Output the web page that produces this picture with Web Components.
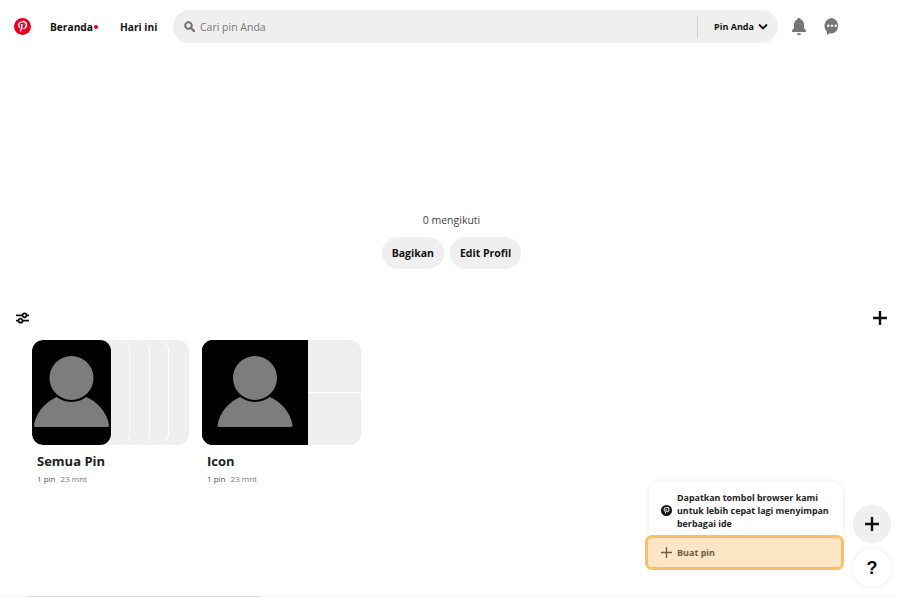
<!DOCTYPE html>
<html>
<head>
<meta charset="utf-8">
<title>Pin Anda</title>
<style>
    html,body{
        margin: 0;
        height: 100%;
        overflow: hidden;
        background: #fff;
        color: #111;
        font-family: "Open Sans", "Noto Sans", sans-serif;
    }
</style>
</head>
<body>
<app-page>
    <top-bar></top-bar>
    <profile-head></profile-head>
    <board-tools></board-tools>
    <board-list>
        <board-card name="Semua Pin" meta="23 mnt" kind="stack"></board-card>
        <board-card name="Icon" meta="23 mnt" kind="grid"></board-card>
    </board-list>
    <float-help></float-help>
</app-page>

<script>
const PERSON=/*html*/`
    <svg viewBox="0 0 79 105" width="100%" height="100%">
        <rect x="-20" width="119" height="105" fill="#000"/>
        <path d="M2 85C4 72 14 61 27 56H52C65 61 75 72 77 85C77 86.500 76 87 75 87H4C3 87 2 86.500 2 85Z" fill="#7d7d7d"/>
        <circle cx="39.500" cy="38" r="24" fill="#000"/>
        <circle cx="39.500" cy="38" r="22" fill="#7d7d7d"/>
    </svg>`;

class AppPage extends HTMLElement{
    constructor() {
        super();
        this.attachShadow({ mode: "open" }).innerHTML=/*html*/`
            <style>
                :host{
                    display: flex;
                    flex-direction: column;
                    position: relative;
                    height: 597px;
                    overflow: hidden;
                }
                .scroll{
                    position: absolute;
                    left: 0;
                    right: 0;
                    bottom: 0;
                    height: 1px;
                    background: #f4f4f4;
                }
                .scroll i{
                    display: block;
                    margin-left: 27px;
                    width: 233px;
                    height: 1px;
                    background: #d9d9d9;
                }
            </style>
            <slot></slot>
            <div class="scroll"><i></i></div>
        `;
    }
}

class TopBar extends HTMLElement{
    constructor() {
        super();
        this.attachShadow({ mode: "open" }).innerHTML=/*html*/`
            <style>
                :host{
                    display: flex;
                    align-items: center;
                    height: 53px;
                    padding-left: 14px;
                    font-size: 10.200px;
                    font-weight: 700;
                    color: #111;
                }
                .logo{
                    width: 17px;
                    height: 17px;
                    margin-right: 19px;
                }
                a{
                    display: flex;
                    align-items: center;
                }
                .home{
                    width: 70px;
                }
                .home i{
                    width: 4px;
                    height: 4px;
                    margin-left: 1px;
                    border-radius: 50%;
                    background: #e60023;
                }
                .today{
                    width: 53px;
                }
                .search{
                    display: flex;
                    align-items: center;
                    width: 605px;
                    height: 33px;
                    box-sizing: border-box;
                    padding: 0 10px 0 11px;
                    border-radius: 17px;
                    background: #efefef;
                    font-size: 10.500px;
                    font-weight: 400;
                    color: #767676;
                }
                .search svg.glass{
                    width: 11px;
                    height: 11px;
                    margin-right: 5px;
                }
                .search span{
                    flex: 1;
                }
                .scope{
                    display: flex;
                    align-items: center;
                    height: 22px;
                    padding-left: 16px;
                    border-left: 1px solid #d0d0d0;
                    font-size: 9px;
                    font-weight: 700;
                    color: #111;
                }
                .scope svg{
                    width: 10px;
                    height: 7px;
                    margin-left: 4px;
                }
                .bell{
                    width: 14px;
                    height: 18px;
                    margin-left: 14px;
                }
                .chat{
                    width: 16px;
                    height: 17px;
                    margin-left: 18px;
                }
            </style>
            <svg class="logo" viewBox="0 0 24 24">
                <circle cx="12" cy="12" r="12" fill="#e60023"/>
                <path fill="#fff" d="M12.300 4.500C8 4.500 5.700 7.300 5.700 10.400c0 1.500.8 3.300 2 3.900.4.200.5.100.6-.3l.3-1.100c0-.2 0-.3-.1-.5-.5-.6-.8-1.400-.8-2.200 0-2.200 1.700-4.200 4.400-4.200 2.400 0 4.100 1.600 4.100 3.900 0 2.600-1.300 4.400-3 4.400-.9 0-1.600-.8-1.400-1.700.3-1.100.8-2.300.8-3.100 0-.7-.4-1.300-1.200-1.300-.9 0-1.700 1-1.700 2.300 0 .8.300 1.400.3 1.400l-1.100 4.600c-.3 1.200 0 3.200.1 3.400 0 .1.200.1.200 0 .1-.2 1.200-1.700 1.600-3.100l.6-2.300c.3.600 1.200 1.100 2.200 1.100 2.900 0 5-2.700 5-6 0-3.200-2.600-5.600-5.700-5.600z"/>
            </svg>
            <a class="home">Beranda<i></i></a>
            <a class="today">Hari ini</a>
            <div class="search">
                <svg class="glass" viewBox="0 0 11 11" fill="none" stroke="#707070">
                    <circle cx="4.500" cy="4.500" r="3.300" stroke-width="2"/>
                    <path d="M7 7 10 10" stroke-width="2.400" stroke-linecap="round"/>
                </svg>
                <span>Cari pin Anda</span>
                <div class="scope">Pin Anda
                    <svg viewBox="0 0 10 7"><path d="M1 1.500 5 5.500 9 1.500" fill="none" stroke="#111" stroke-width="1.800"/></svg>
                </div>
            </div>
            <svg class="bell" viewBox="0 0 14 18">
                <path fill="#767676" d="M7 0C8 0 8.700.7 8.800 1.600 10.900 2.300 12 4.300 12 6.500V10l2 2.500V14H0v-1.500L2 10V6.500C2 4.300 3.100 2.300 5.200 1.600 5.300.7 6 0 7 0zM5 15.200h4a2 2 0 0 1-4 0z"/>
            </svg>
            <svg class="chat" viewBox="0 0 16 17">
                <path fill="#767676" d="M8 0a8 8 0 0 1 0 15.500c-.7 0-1.500-.1-2.200-.3L3 17v-3.200A8 8 0 0 1 8 0z"/>
                <circle cx="4.300" cy="7.800" r="1.200" fill="#fff"/>
                <circle cx="8" cy="7.800" r="1.200" fill="#fff"/>
                <circle cx="11.700" cy="7.800" r="1.200" fill="#fff"/>
            </svg>
        `;
    }
}

class ProfileHead extends HTMLElement{
    constructor() {
        super();
        this.attachShadow({ mode: "open" }).innerHTML=/*html*/`
            <style>
                :host{
                    display: flex;
                    flex-direction: column;
                    align-items: center;
                    padding: 159px 0 0 3px;
                }
                p{
                    margin: 0 0 9px;
                    font-size: 10.500px;
                    line-height: 16px;
                    color: #444;
                }
                div{
                    display: flex;
                    gap: 6px;
                }
                button{
                    height: 32px;
                    padding: 0 10px;
                    border: 0;
                    border-radius: 16px;
                    background: #efefef;
                    color: #111;
                    font: 700 10.500px "Open Sans", sans-serif;
                }
            </style>
            <p>0 mengikuti</p>
            <div>
                <button>Bagikan</button>
                <button>Edit Profil</button>
            </div>
        `;
    }
}

class BoardTools extends HTMLElement{
    constructor() {
        super();
        this.attachShadow({ mode: "open" }).innerHTML=/*html*/`
            <style>
                :host{
                    display: flex;
                    justify-content: space-between;
                    align-items: center;
                    height: 17px;
                    margin-top: 40px;
                    padding: 0 13px 0 16px;
                }
                .filter{
                    width: 13px;
                    height: 14px;
                }
                .add{
                    width: 14px;
                    height: 14px;
                }
            </style>
            <svg class="filter" viewBox="0 0 13 14" fill="none" stroke="#111" stroke-width="1.800">
                <path d="M0 4.300H13M0 9.700H13"/>
                <circle cx="8.500" cy="4.300" r="2" fill="#fff"/>
                <circle cx="4.500" cy="9.700" r="2" fill="#fff"/>
            </svg>
            <svg class="add" viewBox="0 0 14 14"><path d="M7 0V14M0 7H14" stroke="#111" stroke-width="2.400"/></svg>
        `;
    }
}

class BoardList extends HTMLElement{
    constructor() {
        super();
        this.attachShadow({ mode: "open" }).innerHTML=/*html*/`
            <style>
                :host{
                    display: flex;
                    gap: 13px;
                    margin-top: 14px;
                    padding-left: 32px;
                }
            </style>
            <slot></slot>
        `;
    }
}

class BoardCard extends HTMLElement{
    connectedCallback() {
        if (this.shadowRoot) return;
        const kind=this.getAttribute("kind");
        const cover=kind == "stack" ? /*html*/`
            <div class="stack">
                <i class="s4"></i><i class="s3"></i><i class="s2"></i><i class="s1"></i>
                <div class="top">${PERSON}</div>
            </div>` : /*html*/`
            <div class="grid">
                <div class="big">${PERSON}</div>
                <div class="side"><i></i><i></i></div>
            </div>`;
        this.attachShadow({ mode: "open" }).innerHTML=/*html*/`
            <style>
                :host{
                    display: block;
                    width: 157px;
                }
                .stack,.grid{
                    height: 105px;
                    width: 157px;
                    border-radius: 11px;
                    overflow: hidden;
                }
                .stack{
                    position: relative;
                }
                .stack i{
                    position: absolute;
                    top: 0;
                    left: 0;
                    height: 105px;
                    background: #efefef;
                    border-radius: 11px;
                    border-right: 1px solid #fff;
                    box-sizing: border-box;
                }
                .s1{ width: 98px; }
                .s2{ width: 118px; }
                .s3{ width: 137px; }
                .s4{ width: 157px; border-right: 0 !important; }
                .top{
                    position: absolute;
                    top: 0;
                    left: 0;
                    width: 79px;
                    height: 105px;
                    border-radius: 11px;
                    overflow: hidden;
                }
                .grid{
                    display: flex;
                    width: 159px;
                }
                .big{
                    width: 106px;
                    height: 105px;
                    background: #000;
                    overflow: hidden;
                }
                .side{
                    display: flex;
                    flex-direction: column;
                    gap: 1px;
                    flex: 1;
                }
                .side i{
                    flex: 1;
                    background: #efefef;
                }
                svg{
                    display: block;
                }
                h3{
                    margin: 7px 0 0 5px;
                    font-size: 13px;
                    line-height: 18px;
                    font-weight: 700;
                    color: #222;
                    white-space: nowrap;
                }
                p{
                    margin: 3px 0 0 5px;
                    font-size: 8px;
                    line-height: 12px;
                    color: #555;
                }
                p span{
                    margin-left: 3px;
                    color: #767676;
                }
            </style>
            ${cover}
            <h3>${this.getAttribute("name")}</h3>
            <p>1 pin <span>${this.getAttribute("meta")}</span></p>
        `;
    }
}

class FloatHelp extends HTMLElement{
    constructor() {
        super();
        this.attachShadow({ mode: "open" }).innerHTML=/*html*/`
            <style>
                :host{
                    display: block;
                    position: absolute;
                    right: 9px;
                    bottom: 9px;
                    width: 246px;
                    height: 106px;
                    font-size: 9px;
                    font-weight: 700;
                }
                .menu{
                    position: absolute;
                    left: 0;
                    top: 0;
                    width: 199px;
                }
                .tip{
                    display: flex;
                    align-items: center;
                    gap: 5px;
                    height: 54px;
                    box-sizing: border-box;
                    margin: 0 1px 0 4px;
                    padding: 2px 8px 0 12px;
                    border-radius: 11px 11px 0 0;
                    background: #fff;
                    box-shadow: 0 0 5px rgba(0,0,0,.1);
                    line-height: 13px;
                    color: #222;
                }
                .tip svg{
                    flex: none;
                    width: 11px;
                    height: 11px;
                }
                .tip span{
                    font-size: 8.900px;
                }
                .make{
                    display: flex;
                    align-items: center;
                    gap: 5px;
                    position: relative;
                    height: 35px;
                    margin-top: -1px;
                    box-sizing: border-box;
                    padding-left: 13px;
                    border: 3px solid #f8c06a;
                    border-radius: 7px;
                    background: #fde6c6;
                    color: #6f5a3e;
                }
                .make svg{
                    width: 11px;
                    height: 11px;
                }
                .fab{
                    position: absolute;
                    right: 0;
                    display: flex;
                    align-items: center;
                    justify-content: center;
                    width: 38px;
                    height: 38px;
                    border-radius: 50%;
                }
                .plus{
                    top: 23px;
                    background: #efefef;
                }
                .plus svg{
                    width: 14px;
                    height: 14px;
                }
                .help{
                    top: 67px;
                    background: #fff;
                    box-shadow: 0 0 5px rgba(0,0,0,.1);
                    font-size: 18px;
                    color: #111;
                    font-family: "Liberation Sans", sans-serif;
                }
            </style>
            <div class="menu">
                <div class="tip">
                    <svg viewBox="0 0 24 24">
                        <path fill="#111" fill-rule="evenodd" d="M12 0a12 12 0 1 1 0 24 12 12 0 0 1 0-24zm.300 4.500C8 4.500 5.700 7.300 5.700 10.400c0 1.500.8 3.300 2 3.900.4.200.5.100.6-.3l.3-1.100c0-.2 0-.3-.1-.5-.5-.6-.8-1.400-.8-2.200 0-2.200 1.700-4.200 4.400-4.200 2.400 0 4.100 1.600 4.100 3.900 0 2.600-1.300 4.400-3 4.400-.9 0-1.600-.8-1.400-1.700.3-1.100.8-2.300.8-3.100 0-.7-.4-1.300-1.200-1.300-.9 0-1.700 1-1.700 2.300 0 .8.300 1.400.3 1.400l-1.100 4.600c-.3 1.200 0 3.200.1 3.400 0 .1.200.1.200 0 .1-.2 1.200-1.700 1.600-3.100l.6-2.300c.3.600 1.200 1.100 2.200 1.100 2.900 0 5-2.700 5-6 0-3.200-2.600-5.600-5.700-5.600z"/>
                    </svg>
                    <span>Dapatkan tombol browser kami untuk lebih cepat lagi menyimpan berbagai ide</span>
                </div>
                <div class="make">
                    <svg viewBox="0 0 11 11"><path d="M5.500 0V11M0 5.500H11" stroke="#6f5a3e" stroke-width="1.300"/></svg>
                    Buat pin
                </div>
            </div>
            <div class="fab plus">
                <svg viewBox="0 0 14 14"><path d="M7 0V14M0 7H14" stroke="#111" stroke-width="2.400"/></svg>
            </div>
            <div class="fab help">?</div>
        `;
    }
}

customElements.define("app-page", AppPage);
customElements.define("top-bar", TopBar);
customElements.define("profile-head", ProfileHead);
customElements.define("board-tools", BoardTools);
customElements.define("board-list", BoardList);
customElements.define("board-card", BoardCard);
customElements.define("float-help", FloatHelp);
</script>
</body>
</html>
